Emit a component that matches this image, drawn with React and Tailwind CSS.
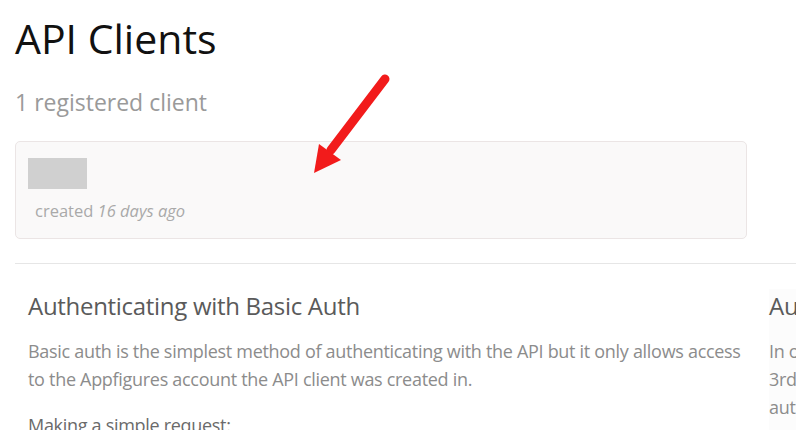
import React from 'react';

function Arrow() {
  return (
    <svg className="absolute left-[300px] top-[68px]" width="100" height="115" viewBox="300 68 100 115">
      <line x1="385" y1="79" x2="331" y2="150" stroke="#f21b1b" strokeWidth="9" strokeLinecap="round" />
      <polygon points="314,173 319,144 341,160" fill="#f21b1b" />
    </svg>
  );
}

export default function App() {
  return (
    <div className="relative w-[796px] h-[430px] overflow-hidden bg-white font-['Open_Sans',sans-serif]">
      <div className="px-[15px] pt-[13px]">
        <h1 className="text-[41px] leading-[50px] text-[#111]">API Clients</h1>
        <p className="mt-[24px] text-[23px] leading-[30px] text-[#9a9a9a]">1 registered client</p>
        <div className="mt-[24px] w-[732px] h-[98px] rounded-[5px] border border-[#ebe5e5] bg-[#faf9f9] pl-[12px] pt-[16px]">
          <div className="w-[59px] h-[31px] bg-[#d0d0d0]" />
          <p className="mt-[11px] pl-[7px] text-[16.5px] leading-[22px] text-[#a9a9a9]">
            created <span className="italic">16 days ago</span>
          </p>
        </div>
      </div>
      <div className="mt-[24px] ml-[15px] border-t border-[#e6e6e6]" />
      <div className="flex gap-[23px] pl-[28px] pt-[25px]">
        <section className="w-[718px] shrink-0">
          <h2 className="text-[24px] leading-[33px] text-[#5a5a5a] tracking-[-0.3px]">Authenticating with Basic Auth</h2>
          <p className="mt-[15px] text-[18px] leading-[28px] text-[#8c8c8c] tracking-[-0.3px]">
            Basic auth is the simplest method of authenticating with the API but it only allows access to the Appfigures account the API client was created in.
          </p>
          <p className="mt-[18px] text-[18px] leading-[28px] text-[#6a6a6a] tracking-[-0.3px]">Making a simple request:</p>
        </section>
        <section className="w-[713px] shrink-0 bg-[#fcfcfc]">
          <h2 className="text-[24px] leading-[33px] text-[#5a5a5a] tracking-[-0.3px]">Authenticating with OAuth</h2>
          <p className="mt-[15px] text-[18px] leading-[28px] text-[#8c8c8c] tracking-[-0.3px]">
            In order to access data from other Appfigures accounts, e.g. when building a
            <br />
            3rd party app, your client will need to use OAuth to have users authorize
            <br />
            authentication of their data through a standard flow.
          </p>
        </section>
      </div>
      <Arrow />
    </div>
  );
}
